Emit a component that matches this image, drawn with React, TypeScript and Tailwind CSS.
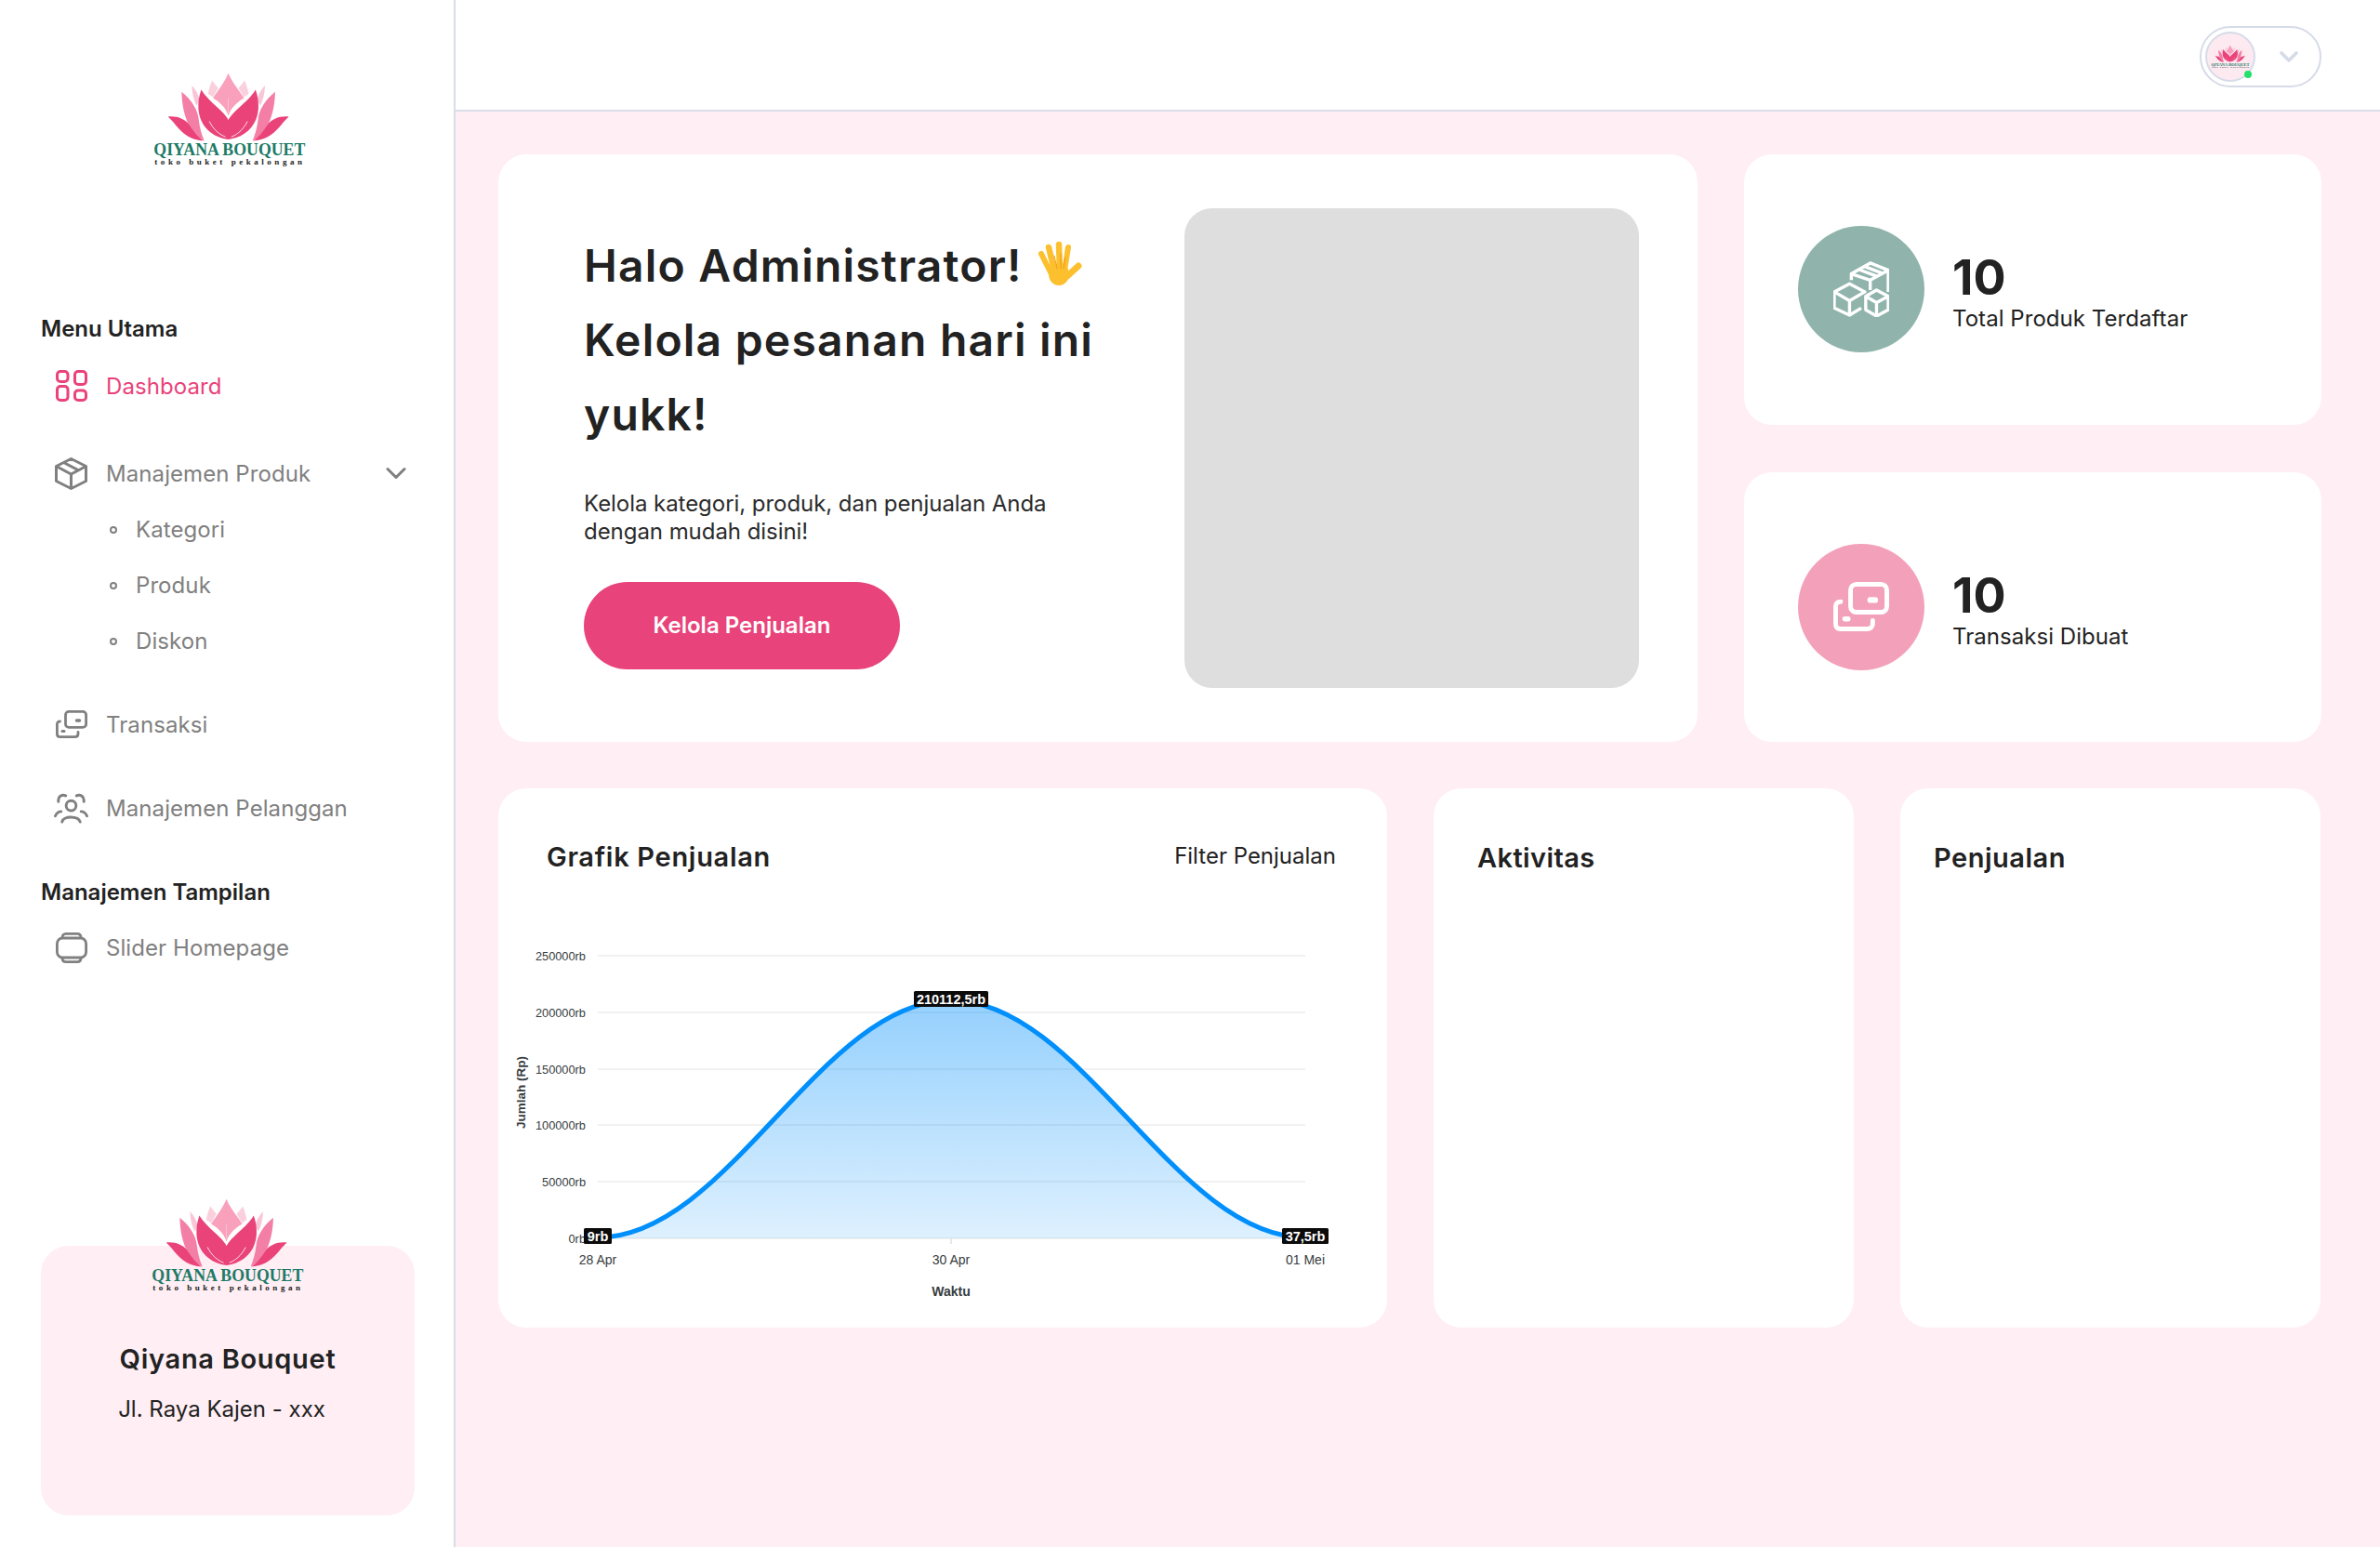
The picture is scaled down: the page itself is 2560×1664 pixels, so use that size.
import React from 'react';
import { ChevronDown } from 'lucide-react';

const gray = 'text-[#808080]';

function Logo({ className }: { className: string }) {
  const petals = (
    <>
      <path d="M385 108C378 125 374 140 372 152L388 162L405 133C398 125 391 116 385 108Z" fill="#fbd0de" />
      <path d="M320 125C320 150 326 172 335 190L345 172C342 155 332 138 320 125Z" fill="#f9c6d8" />
      <path d="M287 145C288 205 305 275 360 303C352 285 345 262 342 235C340 205 320 172 287 145Z" fill="#f47fa6" />
      <path d="M243 225C272 250 290 298 358 303C340 292 325 272 312 252C298 232 272 222 243 225Z" fill="#e9437a" />
      <path d="M350 138C342 160 340 180 341 200C345 255 385 292 438 298C447 280 448 262 441 242C425 205 375 180 350 138Z" fill="#e9437a" />
      <path d="M376 240C390 268 410 283 428 290" fill="none" stroke="#fff" strokeWidth="2.5" />
    </>
  );
  return (
    <svg viewBox="190 80 500 305" className={className}>
      <path d="M437 85C425 115 404 140 388 165C410 178 430 196 437 222C445 196 466 178 488 165C472 140 450 115 437 85Z" fill="#f9a0bd" />
      <path d="M437 165L437 215" stroke="#fbd0de" strokeWidth="2" />
      {petals}
      <g transform="translate(875 0) scale(-1 1)">{petals}</g>
      <text x="197" y="350" textLength="488" lengthAdjust="spacingAndGlyphs" className="font-['Liberation_Serif'] text-[54px] font-bold fill-[#1c7a66]">
        QIYANA BOUQUET
      </text>
      <text x="200" y="378" textLength="475" className="font-['Liberation_Serif'] text-[27px] font-bold fill-[#222222]">
        toko buket pekalongan
      </text>
    </svg>
  );
}

function DashboardIcon() {
  return (
    <svg viewBox="0 0 34 34" className="w-[34px] h-[34px]" fill="none" stroke="#e9437a" strokeWidth="3">
      <rect x="1.5" y="1.5" width="11.5" height="11" rx="3.5" />
      <rect x="20.5" y="1.5" width="12" height="14" rx="3.5" />
      <rect x="1.5" y="17.5" width="11.5" height="15" rx="3.5" />
      <rect x="20.5" y="22" width="12" height="10.5" rx="3.5" />
    </svg>
  );
}

function BoxIcon() {
  return (
    <svg viewBox="0 0 35 35" className="w-[35px] h-[35px]" fill="none" stroke="#808080" strokeWidth="3" strokeLinejoin="round">
      <path d="M17.5 1.5L33.5 9.5V25.5L17.5 33.5L1.5 25.5V9.5Z" />
      <path d="M1.5 9.5L17.5 18L33.5 9.5M17.5 18V33.5M9.5 5.5L25.5 13.8" />
    </svg>
  );
}

function CardsIcon({ className, stroke }: { className: string; stroke: string }) {
  return (
    <svg viewBox="0 0 34 30" className={className} fill="none" stroke={stroke} strokeWidth="2.8" strokeLinecap="round">
      <rect x="10.5" y="1.4" width="22.1" height="17" rx="3.5" />
      <path d="M4.5 12C2.5 12 1.4 13 1.4 15V25.5C1.4 27.5 2.5 28.6 4.5 28.6H20.5C22.5 28.6 24 27.5 24 25.5V23.5" />
      <path d="M22.5 11H25.5" strokeWidth="3.5" />
      <path d="M7 22.5H9" strokeWidth="3" />
    </svg>
  );
}

function UsersIcon() {
  return (
    <svg viewBox="0 0 38 33" className="w-[38px] h-[33px]" fill="none" stroke="#808080" strokeWidth="3" strokeLinecap="round">
      <circle cx="19" cy="13.5" r="5.5" />
      <path d="M9 31.5C10 24.5 27 24.5 29 31.5" />
      <path d="M5 9C4 3.5 9 0.5 13 2.5" />
      <path d="M33 9C34 3.5 29 0.5 25 2.5" />
      <path d="M1.5 25C3 21.5 5.5 20 8 20" />
      <path d="M36.5 25C35 21.5 32.5 20 30 20" />
    </svg>
  );
}

function SliderIcon() {
  return (
    <svg viewBox="0 0 34 33" className="w-[34px] h-[33px]" fill="none" stroke="#808080" strokeWidth="2.8">
      <rect x="1.4" y="6" width="31.2" height="21" rx="6" />
      <path d="M7 6V5.5C7 3 8.5 1.4 11 1.4H23C25.5 1.4 27 3 27 5.5V6" />
      <path d="M7 27V27.5C7 30 8.5 31.6 11 31.6H23C25.5 31.6 27 30 27 27.5V27" />
    </svg>
  );
}

function BoxesIcon() {
  return (
    <svg viewBox="-1 -1 62 62" className="w-[60px] h-[60px]" fill="none" stroke="#fff" strokeWidth="3.5" strokeLinejoin="round">
      <path d="M19 20V13L40 1L60 9V33" />
      <path d="M19 13L40 20L60 9M40 20V31M27 8L48 16M33 4.5L54 12.5" />
      <path d="M30 51L17 59L0 51V33L17 24L34 33L17 43V59M0 33L17 43" />
      <path d="M47 31L60 38V53L47 60L35 53V38ZM35 38L47 45L60 38M47 45V60" />
    </svg>
  );
}

function WaveHand() {
  return (
    <svg viewBox="0 0 48 50" className="inline-block w-[48px] h-[50px] align-[-6px] ml-[16px]" fill="none" stroke="#fcc02e" strokeLinecap="round">
      <path d="M4 14L14 34" strokeWidth="6" />
      <path d="M12 7L18 32" strokeWidth="6.5" />
      <path d="M23 4L24 32" strokeWidth="6.5" />
      <path d="M33 7L29 32" strokeWidth="6" />
      <path d="M44 27L32 38" strokeWidth="7" />
      <ellipse cx="23" cy="36" rx="11" ry="12" fill="#fcc02e" stroke="none" />
      <path d="M18 16L21 30M25 14L25 30M30 18L28 30" stroke="#ee9a1c" strokeWidth="1" />
    </svg>
  );
}

function NavRow({ icon, label, active }: { icon: React.ReactNode; label: string; active?: boolean }) {
  return (
    <div className="flex items-center h-[60px] pl-[14px]">
      <span className="flex justify-center w-[37px] mr-[19px]">{icon}</span>
      <span className={`mt-[2px] tracking-[0.08px] ${active ? 'text-[#e9437a]' : gray}`}>{label}</span>
    </div>
  );
}

function SubRow({ label }: { label: string }) {
  return (
    <div className="flex items-center h-[60px] pl-[74px]">
      <span className="w-2 h-2 rounded-full border-2 border-[#808080] mr-5" />
      <span className={`tracking-[0.08px] ${gray}`}>{label}</span>
    </div>
  );
}

function Sidebar() {
  return (
    <aside className="flex flex-col w-[490px] shrink-0 min-h-screen bg-white border-r-2 border-[#d9dde8] pl-[44px] pr-[42px] pb-[34px] text-2xl">
      <div className="pt-[77px] pl-[119px]">
        <Logo className="w-[167px] h-[102px]" />
      </div>
      <h3 className="mt-[161px] font-semibold leading-7 text-[#222222]">Menu Utama</h3>
      <div className="mt-[17px]">
        <NavRow icon={<DashboardIcon />} label="Dashboard" active />
      </div>
      <div className="mt-[34px] flex items-center">
        <div className="flex-1">
          <NavRow icon={<BoxIcon />} label="Manajemen Produk" />
        </div>
        <ChevronDown className="w-9 h-9 mr-[2px] text-[#808080]" strokeWidth={2} />
      </div>
      <div className="mt-px">
        <SubRow label="Kategori" />
        <SubRow label="Produk" />
        <SubRow label="Diskon" />
      </div>
      <div className="mt-[29px]">
        <NavRow icon={<CardsIcon className="w-[34px] h-[30px]" stroke="#808080" />} label="Transaksi" />
      </div>
      <div className="mt-[30px]">
        <NavRow icon={<UsersIcon />} label="Manajemen Pelanggan" />
      </div>
      <h3 className="mt-[47px] font-semibold leading-7 text-[#222222]">Manajemen Tampilan</h3>
      <div className="mt-[15px]">
        <NavRow icon={<SliderIcon />} label="Slider Homepage" />
      </div>
      <div className="mt-auto h-[290px] rounded-[30px] bg-[#ffeef4]">
        <div className="-mt-[52px] pl-[117px]">
          <Logo className="w-[167px] h-[102px]" />
        </div>
        <p className="mt-[52px] text-center text-[29px] font-semibold tracking-[0.7px] leading-10 text-[#222222]">Qiyana Bouquet</p>
        <p className="mt-[19px] pr-[13px] text-center leading-[30px] text-[#222222]">Jl. Raya Kajen - xxx</p>
      </div>
    </aside>
  );
}

function Topbar() {
  return (
    <header className="flex items-center justify-end h-[120px] bg-white border-b-2 border-[#d9dde8] pt-[3px] pr-[63px]">
      <div className="relative flex items-center w-[131px] h-[66px] rounded-full border-2 border-[#d6dbe8] pl-[4px]">
        <div className="flex items-center justify-center w-[54px] h-[54px] rounded-full border-2 border-[#d6dbe8] bg-[#fdeaf1]">
          <Logo className="w-[42px] h-[26px]" />
        </div>
        <span className="absolute left-[46px] top-[46px] w-[8px] h-[8px] rounded-full bg-[#22e06a]" />
        <ChevronDown className="ml-[20px] w-[32px] h-[32px] text-[#d6dbe8]" strokeWidth={2.8} />
      </div>
    </header>
  );
}

function StatCard({ icon, tone, label }: { icon: React.ReactNode; tone: string; label: string }) {
  return (
    <div className="flex flex-1 items-center rounded-[30px] bg-white pl-[58px]">
      <div className={`flex items-center justify-center w-[136px] h-[136px] rounded-full ${tone}`}>{icon}</div>
      <div className="ml-[30px] mt-[10px]">
        <p className="text-[52px] font-bold leading-[50px] text-[#222222]">10</p>
        <p className="mt-[4px] text-2xl tracking-[0.05px] leading-[30px] text-[#222222]">{label}</p>
      </div>
    </div>
  );
}

function ChartBadge({ x, w, y, label }: { x: number; w: number; y: number; label: string }) {
  return (
    <g>
      <rect x={x} y={y} width={w} height={17} rx="1.5" fill="#0b0b0b" />
      <text x={x + w / 2} y={y + 13.5} textAnchor="middle" className="font-['Liberation_Sans'] text-[14.5px] font-bold fill-white">
        {label}
      </text>
    </g>
  );
}

function SalesChart() {
  const grid = [
    { y: 1028, label: '250000rb' },
    { y: 1089, label: '200000rb' },
    { y: 1150, label: '150000rb' },
    { y: 1210, label: '100000rb' },
    { y: 1271, label: '50000rb' },
    { y: 1332, label: '0rb' },
  ];
  const curve = 'M643 1331C783 1331 883 1076 1023 1076C1163 1076 1264 1331 1404 1331';
  return (
    <svg viewBox="536 941 956 487" className="w-[956px] h-[487px]">
      <defs>
        <linearGradient id="salesArea" x1="0" y1="0" x2="0" y2="1">
          <stop offset="0" stopColor="#008ffb" stopOpacity="0.42" />
          <stop offset="1" stopColor="#008ffb" stopOpacity="0.13" />
        </linearGradient>
      </defs>
      {grid.map((g) => (
        <g key={g.y}>
          <line x1="643" x2="1404" y1={g.y} y2={g.y} stroke="#ececec" strokeWidth="1.5" />
          <text x="630" y={g.y + 4.5} textAnchor="end" className="font-['Liberation_Sans'] text-[12.8px] fill-[#373d3f]">
            {g.label}
          </text>
        </g>
      ))}
      <line x1="1023" x2="1023" y1="1332" y2="1338" stroke="#e0e0e0" strokeWidth="1.5" />
      <path d={`${curve}V1332H643Z`} fill="url(#salesArea)" />
      <path d={curve} fill="none" stroke="#008ffb" strokeWidth="5" />
      <ChartBadge x={628} w={30} y={1321} label="9rb" />
      <ChartBadge x={983} w={80} y={1066} label="210112,5rb" />
      <ChartBadge x={1379} w={50} y={1321} label="37,5rb" />
      {[
        { x: 643, label: '28 Apr' },
        { x: 1023, label: '30 Apr' },
        { x: 1404, label: '01 Mei' },
      ].map((t) => (
        <text key={t.x} x={t.x} y="1360" textAnchor="middle" className="font-['Liberation_Sans'] text-[14px] fill-[#373d3f]">
          {t.label}
        </text>
      ))}
      <text x="1023" y="1393.5" textAnchor="middle" className="font-['Liberation_Sans'] text-[14px] font-bold fill-[#373d3f]">
        Waktu
      </text>
      <text transform="translate(564.5 1175) rotate(-90)" textAnchor="middle" className="font-['Liberation_Sans'] text-[13.5px] font-bold fill-[#373d3f]">
        Jumlah (Rp)
      </text>
    </svg>
  );
}

export default function App() {
  return (
    <div className="flex min-h-screen bg-[#ffeef4] font-['Inter',sans-serif]">
      <Sidebar />
      <main className="flex-1 min-w-0">
        <Topbar />
        <div className="flex flex-col gap-[50px] pt-[46px] pl-[46px] pr-[63px]">
          <section className="flex gap-[50px]">
            <div className="flex justify-between w-[1290px] h-[632px] rounded-[30px] bg-white pl-[92px] pr-[63px] py-[58px]">
              <div className="pt-[22px] w-[600px]">
                <h1 className="text-[48px] font-semibold tracking-[1.2px] leading-[80px] text-[#222222]">
                  Halo Administrator!
                  <WaveHand />
                  <br />
                  Kelola pesanan hari ini
                  <br />
                  yukk!
                </h1>
                <p className="mt-[41px] w-[520px] text-2xl tracking-[-0.05px] leading-[30px] text-[#2b2b2b]">
                  Kelola kategori, produk, dan penjualan Anda dengan mudah disini!
                </p>
                <button className="mt-[39px] w-[340px] h-[94px] rounded-full bg-[#e8437a] text-2xl font-semibold text-white">
                  Kelola Penjualan
                </button>
              </div>
              <div className="w-[489px] h-[516px] rounded-[30px] bg-[#dedede]" />
            </div>
            <div className="flex flex-1 flex-col gap-[51px]">
              <StatCard icon={<BoxesIcon />} tone="bg-[#90b4ac]" label="Total Produk Terdaftar" />
              <StatCard icon={<CardsIcon className="w-[60px] h-[53px]" stroke="#fff" />} tone="bg-[#f3a1bb]" label="Transaksi Dibuat" />
            </div>
          </section>
          <section className="flex gap-[50px] h-[580px]">
            <div className="w-[956px] rounded-[30px] bg-white">
              <div className="flex items-center justify-between h-[40px] mt-[53px] pl-[52px] pr-[55px]">
                <h2 className="mt-[2px] text-[29px] font-semibold tracking-[0.7px] text-[#222222]">Grafik Penjualan</h2>
                <span className="text-2xl text-[#222222]">Filter Penjualan</span>
              </div>
              <SalesChart />
            </div>
            <div className="w-[452px] rounded-[30px] bg-white pl-[47px] pt-[55px]">
              <h2 className="text-[29px] font-semibold tracking-[0.4px] leading-10 text-[#222222]">Aktivitas</h2>
            </div>
            <div className="w-[452px] rounded-[30px] bg-white pl-[36px] pt-[55px]">
              <h2 className="text-[29px] font-semibold tracking-[0.5px] leading-10 text-[#222222]">Penjualan</h2>
            </div>
          </section>
        </div>
      </main>
    </div>
  );
}
